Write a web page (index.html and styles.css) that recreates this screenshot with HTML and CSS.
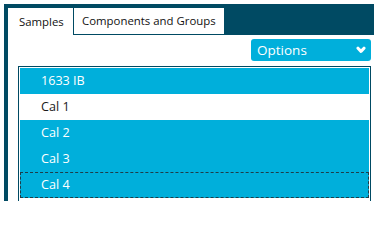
FILE: index.html
```html
<!DOCTYPE html>
<html>
<head>
<meta charset="utf-8">
<link rel="stylesheet" href="styles.css">
</head>
<body>
<div class="frame">
  <div class="tabbar">
    <div class="tab tab-active">Samples</div>
    <div class="tab">Components and Groups</div>
  </div>
  <div class="content">
    <div class="toolbar">
      <button class="options">
        <span>Options</span>
        <svg class="chev" width="10" height="8" viewBox="0 0 10 8"><path d="M2 2.2 L5 5.4 L8 2.2" fill="none" stroke="#fff" stroke-width="3" stroke-linecap="round" stroke-linejoin="round"/></svg>
      </button>
    </div>
    <div class="list">
      <div class="row sel">1633 IB</div>
      <div class="row">Cal 1</div>
      <div class="row sel">Cal 2</div>
      <div class="row sel">Cal 3</div>
      <div class="row sel focus">Cal 4</div>
    </div>
  </div>
</div>
</body>
</html>
```
FILE: styles.css
```css
html, body {
  margin: 0;
  padding: 0;
  height: 201px;
  background: #ffffff;
  font-family: "Open Sans", "Noto Sans", sans-serif;
  overflow: hidden;
}
.frame {
  margin: 4px 0 0 4px;
  border-left: 4px solid #004a63;
  height: 197px;
  display: flex;
  flex-direction: column;
}
.tabbar {
  background: #004a63;
  padding-top: 4px;
  height: 27px;
  display: flex;
  align-items: stretch;
}
.tab {
  background: #ffffff;
  color: #111;
  font-size: 11.4px;
  line-height: 26px;
  padding: 0 0 0 8px;
  box-sizing: border-box;
  border-left: 1px solid #004a63;
  border-bottom: 1px solid #004a63;
  width: 151px;
}
.tab-active {
  width: 65px;
  padding-left: 11px;
  border: none;
  line-height: 27px;
}
.content {
  flex: 1;
  min-height: 0;
  padding: 4px 3px 0 10px;
  display: flex;
  flex-direction: column;
}
.toolbar {
  display: flex;
  justify-content: flex-end;
  height: 22px;
  margin-bottom: 5px;
}
.options {
  width: 120px;
  height: 22px;
  border: none;
  border-radius: 3px;
  background: #00afdb;
  color: #fff;
  font-family: inherit;
  font-size: 13.5px;
  padding: 0 5px 0 6px;
  display: flex;
  align-items: center;
  justify-content: space-between;
}
.chev {
  display: block;
}
.list {
  flex: 1;
  min-height: 0;
  overflow: hidden;
  border: 1px solid #004a63;
  border-bottom: none;
  padding: 1px 1px 0 1px;
}
.row {
  height: 26px;
  line-height: 26px;
  padding-left: 21px;
  font-size: 12.6px;
  color: #1a1a1a;
  box-sizing: border-box;
}
.row.sel {
  background: #00afdb;
  color: #fff;
}
.row.focus {
  border: 1px dashed #1d3d4a;
  padding-left: 20px;
  line-height: 24px;
}
```
